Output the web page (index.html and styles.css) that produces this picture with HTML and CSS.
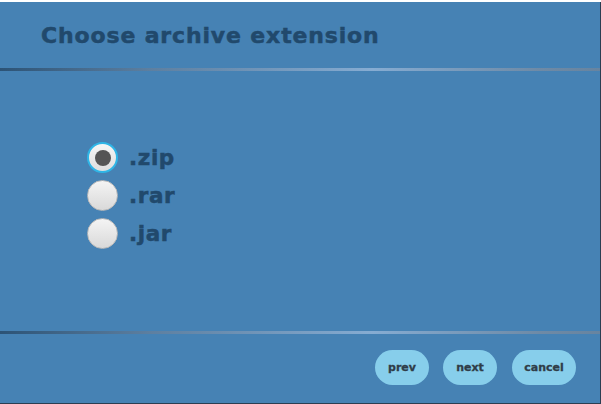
FILE: index.html
```html
<!DOCTYPE html>
<html>
<head>
<meta charset="utf-8">
<link rel="stylesheet" href="styles.css">
</head>
<body>
<div class="dialog">
  <header class="head">
    <h1 class="title">Choose archive extension</h1>
  </header>
  <div class="rule"></div>
  <main class="body">
    <label class="option"><span class="radio checked"><span class="dot"></span></span><span class="label">.zip</span></label>
    <label class="option"><span class="radio"></span><span class="label">.rar</span></label>
    <label class="option"><span class="radio"></span><span class="label">.jar</span></label>
  </main>
  <div class="rule"></div>
  <footer class="foot">
    <button class="btn btn-prev">prev</button>
    <button class="btn btn-next">next</button>
    <button class="btn btn-cancel">cancel</button>
  </footer>
</div>
</body>
</html>
```
FILE: styles.css
```css
html, body {
  margin: 0;
  padding: 0;
  background: #ffffff;
}
.dialog {
  width: 600px;
  height: 401px;
  margin-top: 2px;
  background: #4682b4;
  border-right: 1px solid #2b3e52;
  border-bottom: 1px solid #2b3e52;
  display: flex;
  flex-direction: column;
  font-family: "DejaVu Sans", "Liberation Sans", Arial, sans-serif;
}
.head {
  height: 66px;
  display: flex;
  align-items: center;
  padding-left: 41px;
}
.title {
  margin: 0;
  font-size: 22px;
  font-weight: bold;
  color: #21496c;
  letter-spacing: 0.85px;
  -webkit-text-stroke: 0.5px #21496c;
}
.rule {
  height: 3px;
  background: linear-gradient(to right, #2c5376 0%, #5d7fa0 25%, #86acd2 62%, #6e8aa6 90%, #6784a0 100%);
}
.body {
  flex: 1;
  padding: 71px 0 0 87px;
  display: flex;
  flex-direction: column;
  gap: 7px;
}
.option {
  display: flex;
  align-items: center;
  gap: 11px;
  height: 31px;
}
.radio {
  width: 29px;
  height: 29px;
  border-radius: 50%;
  border: 1px solid #b9b9b9;
  background: linear-gradient(to bottom, #f4f4f4, #d9d9d9);
  display: flex;
  align-items: center;
  justify-content: center;
  box-sizing: content-box;
}
.radio.checked {
  width: 27px;
  height: 27px;
  border: 2px solid #2fb5e6;
  background: linear-gradient(to bottom, #f6f6f6, #dedede);
}
.dot {
  width: 16px;
  height: 16px;
  border-radius: 50%;
  background: #555555;
}
.label {
  font-size: 21.5px;
  font-weight: bold;
  color: #21496c;
  letter-spacing: 0.6px;
  -webkit-text-stroke: 0.5px #21496c;
}
.foot {
  height: 69px;
  display: flex;
  justify-content: flex-end;
  align-items: flex-start;
  padding: 16px 24px 0 0;
  gap: 14px;
  box-sizing: border-box;
}
.btn {
  height: 35px;
  border: none;
  border-radius: 18px;
  background: #87ceeb;
  color: #2f3d48;
  font-family: "DejaVu Sans", "Liberation Sans", Arial, sans-serif;
  font-weight: bold;
  font-size: 11px;
  padding: 0;
  -webkit-text-stroke: 0.3px #2f3d48;
}
.btn-prev { width: 54px; }
.btn-next { width: 54px; }
.btn-cancel { width: 64px; margin-left: 1px; }
```
